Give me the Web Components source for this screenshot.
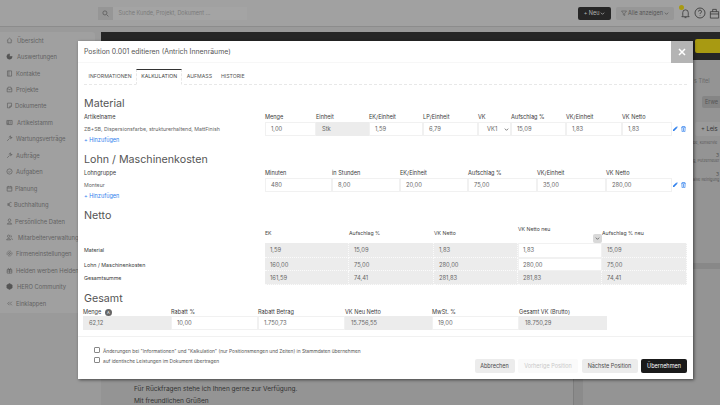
<!DOCTYPE html>
<html lang="de">
<head>
<meta charset="utf-8">
<title>Position editieren</title>
<style>
  html, body { margin: 0; padding: 0; width: 720px; height: 405px; overflow: hidden; background: #9a9a9a; font-family: Inter, "Liberation Sans", sans-serif; }
</style>
</head>
<body>
<app-shell>
  <edit-modal title-text="Position 0.001 editieren (Antrich Innenräume)">
    <calc-row slot="material" heading="Material" first-label="Artikelname" first-value="ZB+SB, Dispersionsfarbe, strukturerhaltend, MattFinish"
      cols="51 53 54 55 33 55 56 50"
      fields="Menge:1,00|Einheit:Stk:grey|EK/Einheit:1,59|LP/Einheit:6,79|VK:VK1:select|Aufschlag %:15,09|VK/Einheit:1,83|VK Netto:1,83"></calc-row>
    <calc-row slot="lohn" heading="Lohn / Maschinenkosten" first-label="Lohngruppe" first-value="Monteur"
      cols="67 68 68 69 69 66"
      fields="Minuten:480|in Stunden:8,00|EK/Einheit:20,00|Aufschlag %:75,00|VK/Einheit:35,00|VK Netto:280,00"></calc-row>
    <netto-table slot="netto"></netto-table>
    <gesamt-row slot="gesamt"></gesamt-row>
  </edit-modal>
</app-shell>

<script>
const ICONS = {
  home: '<path d="M1.500 6 6 2l4.500 4M3 5.500V10h6V5.500"/>',
  pie: '<path d="M6 1.500a4.500 4.500 0 1 0 4.500 4.500H6z" fill="currentColor"/>',
  book: '<path d="M2.500 1.500h7v9h-7zM5 1.500v9"/>',
  box: '<path d="M2 5l1.500-3h5L10 5v5H2zM2 5h2.500l1 1.500h1l1-1.500H10"/>',
  doc: '<path d="M2.500 2h7v5l-3 3h-4zM9.500 7h-3v3"/>',
  table: '<path d="M1.500 2.500h9v7h-9zM5 2.500v7M1.500 5h3.500M1.500 7.500h3.500M7 5h2M7 7h2"/>',
  tool: '<path d="M2 10l4-4M5.500 4.500a2.200 2.200 0 0 1 3-2.500L7 3.500 8.500 5 10 3.500a2.200 2.200 0 0 1-3 2.500"/>',
  check: '<circle cx="6" cy="6" r="4.500"/><path d="M4 6l1.500 1.500L8 4.800"/>',
  cal: '<path d="M2 3h8v7.500H2zM2 5.200h8M4 1.500V3M8 1.500V3"/>',
  euro: '<path d="M9.500 2.800a3.500 3.500 0 1 0 0 6.400M2 5h5M2 7h5"/>',
  user: '<circle cx="6" cy="3.800" r="2.200"/><path d="M2 10.500c.5-3 7.500-3 8 0z"/>',
  users: '<circle cx="4.500" cy="3.800" r="2"/><path d="M1 10c.4-3 6.600-3 7 0zM8 2.200a1.800 1.800 0 0 1 0 3.400M9.200 7c1 .4 1.600 1.500 1.800 3"/>',
  gear: '<circle cx="6" cy="6" r="1.600"/><circle cx="6" cy="6" r="4.200" stroke-dasharray="1.700 .8"/>',
  gift: '<path d="M2 4.500h8v6H2zM6 4.500v6M2 7h8M6 4.500C4 1 2.500 3 4 4.500M6 4.500C8 1 9.500 3 8 4.500"/>',
  hero: '<path d="M6 1l4.500 2.500v5L6 11 1.500 8.500v-5z" fill="currentColor"/>',
  back: '<path d="M6 3 3 6l3 3M10 3 7 6l3 3"/>'
};

function svgIcon(name, size) {
  return `<svg width="${size}" height="${size}" viewBox="0 0 12 12" fill="none" stroke="currentColor" stroke-width="1">${ICONS[name]}</svg>`;
}

const CHEVRON = '<svg width="5" height="5" viewBox="0 0 6 6" fill="none" stroke="currentColor" stroke-width=".900"><path d="M1 2l2 2 2-2"/></svg>';

class AppShell extends HTMLElement {
  constructor() {
    super();
    this.attachShadow({ mode: 'open' });
  }
  connectedCallback() {
    const items = [
      ['home', 'Übersicht', 17], ['pie', 'Auswertungen', 17], ['book', 'Kontakte', 16], ['box', 'Projekte', 16],
      ['doc', 'Dokumente', 15], ['table', 'Artikelstamm', 17], ['tool', 'Wartungsverträge', 16], ['tool', 'Aufträge', 16],
      ['check', 'Aufgaben', 16], ['cal', 'Planung', 15], ['euro', 'Buchhaltung', 14], ['user', 'Persönliche Daten', 15],
      ['users', 'Mitarbeiterverwaltung', 18], ['gear', 'Firmeneinstellungen', 16], ['gift', 'Helden werben Helden', 16],
      ['hero', 'HERO Community', 17], ['back', 'Einklappen', 16]
    ];
    const nav = items.map(([i, t, x]) => `<div class="item">${svgIcon(i, 7)}<span style="margin-left:${x - 13}px">${t}</span></div>`).join('');
    this.shadowRoot.innerHTML = `
    <style>
      :host { display: block; width: 720px; height: 405px; position: relative; overflow: hidden; color: #4c4c4c; font-size: 6.500px; }
      .top { height: 27px; background: #a1a1a1; border-bottom: 1px solid #8c8c8c; display: flex; align-items: center; padding: 0 0 0 98px; box-sizing: border-box; }
      .sicon { width: 16px; height: 13px; background: #969696; display: flex; align-items: center; justify-content: center; }
      .search { width: 133px; height: 13px; line-height: 13px; padding-left: 5px; color: #7b7b7b; font-size: 5.500px; background: #a4a4a4; white-space: nowrap; }
      .new { margin-left: 331px; width: 34px; height: 13px; background: #262626; color: #b5b5b5; border-radius: 2px; font-size: 5.500px; display: flex; align-items: center; justify-content: center; gap: 1px; }
      .all { margin-left: 5px; width: 60px; height: 13px; background: #979797; color: #555; border-radius: 2px; font-size: 5.500px; display: flex; align-items: center; justify-content: center; gap: 1px; }
      .ic { margin-left: 6px; display: flex; gap: 3px; align-items: center; color: #303030; position: relative; flex: none; }
      .dot { position: absolute; left: -1px; top: -2px; width: 5px; height: 5px; background: #a89a12; border-radius: 50%; }
      .main { display: flex; height: 378px; }
      .side { width: 95px; height: 281px; margin-top: 5px; background: #a0a0a0; border-radius: 0 3px 3px 0; box-sizing: border-box; flex: none; overflow: hidden; }
      .item { height: 16.450px; display: flex; align-items: center; padding-left: 6px; white-space: nowrap; color: #626262; font-size: 5.800px; }
      .item svg { color: #555; flex: none; }
      .content { margin: 5px 0 0 6px; flex: 1; display: flex; flex-direction: column; min-width: 0; }
      .banner { height: 28px; background: #262626; display: flex; justify-content: flex-end; align-items: flex-start; flex: none; padding-top: 7px; box-sizing: border-box; }
      .banner i { width: 25px; height: 14px; background: #a89a12; border-radius: 2px 0 0 2px; }
      .panel { flex: 1; background: #949494; display: flex; flex-direction: column; align-items: flex-end; position: relative; }
      .strip { position: absolute; left: 472px; top: 315px; width: 9px; height: 40px; background: #8b8b8b; border-left: 1px solid #7e7e7e; }
      .rside { width: 27px; padding-top: 17.500px; font-size: 5.500px; color: #555; white-space: nowrap; overflow: hidden; }
      .rside .t { line-height: 7px; height: 7px; padding-left: 1px; color: #6a6a6a; }
      .rside .b { background: #858585; height: 12px; line-height: 12px; padding-left: 3px; font-size: 5.500px; margin: 11.500px 0 0 9px; border-radius: 2px 0 0 2px; }
      .rside .c { background: #9a9a9a; height: 14px; line-height: 14px; padding-left: 6px; font-size: 5.800px; margin: 14px 0 0 2px; border-radius: 2px 0 0 2px; color: #333; }
      .rside .s { font-size: 3.800px; height: 6px; color: #5c5c5c; line-height: 6px; overflow: hidden; }
      .rside .first { margin-top: 4px; }
      .rside .n { font-size: 5px; line-height: 6px; text-align: right; padding: 6px 1px 0 0; }
      .rside .band { margin-top: 80px; height: 6px; background: #888; }
      .letter { position: absolute; left: 33px; top: 323px; font-size: 6.500px; color: #333; line-height: 12px; white-space: nowrap; }
    </style>
    <div class="top">
      <div class="sicon"><svg width="7" height="7" viewBox="0 0 12 12" fill="none" stroke="#5a5a5a" stroke-width="1.300"><circle cx="5" cy="5" r="3.500"/><path d="M8 8l3 3"/></svg></div>
      <div class="search">Suche Kunde, Projekt, Dokument ...</div>
      <div class="new">+ Neu ${CHEVRON}</div>
      <div class="all"><svg width="6" height="6" viewBox="0 0 6 6" fill="none" stroke="#555" stroke-width=".600"><path d="M.5 1h5L3.700 3.300V5.500L2.300 4.800V3.300z"/></svg> Alle anzeigen ${CHEVRON}</div>
      <div class="ic"><span class="dot"></span>
        <svg width="11" height="11" viewBox="0 0 12 12" fill="none" stroke="currentColor" stroke-width=".800"><path d="M3 8.500V5a3 3 0 0 1 6 0v3.500l1 1H2zM5 10.500h2"/></svg>
        <svg width="12" height="12" viewBox="0 0 12 12" fill="none" stroke="currentColor" stroke-width=".800"><circle cx="6" cy="6" r="5"/><path d="M4.500 4.500a1.500 1.500 0 1 1 2 1.500c-.4.200-.5.500-.5 1M6 8.500v.5"/></svg>
        <svg width="11" height="11" viewBox="0 0 12 12" fill="none" stroke="currentColor" stroke-width=".800"><path d="M1.500 4h9v7h-9zM1.500 6.500h9M4 4V1.500h4V4"/></svg>
      </div>
    </div>
    <div class="main">
      <div class="side">${nav}</div>
      <div class="content">
        <div class="banner"><i></i></div>
        <div class="panel">
          <div class="rside">
            <div class="t">s Titel</div>
            <div class="b">Erwe</div>
            <div class="c">+ Leis</div>
            <div class="s first">be, konservie</div>
            <div class="n">3</div>
            <div class="s">g, Putzerneuer</div>
            <div class="n" style="padding-top:7px">3</div>
            <div class="s">aive Reinigung</div>
            <div class="band"></div>
          </div>
          <div class="strip"></div>
          <div class="letter">Für Rückfragen stehe ich Ihnen gerne zur Verfügung.<br>Mit freundlichen Grüßen</div>
        </div>
      </div>
    </div>
    <slot></slot>`;
  }
}

class EditModal extends HTMLElement {
  constructor() {
    super();
    this.attachShadow({ mode: 'open' });
  }
  connectedCallback() {
    this.shadowRoot.innerHTML = `
    <style>
      :host { display: flex; flex-direction: column; position: absolute; left: 78px; top: 41px; width: 615px; height: 338px; background: #fff; color: #3c3c3c; box-shadow: 1px 1px 3px rgba(0,0,0,.55); box-sizing: border-box; }
      .close { position: absolute; right: 0; top: 0; width: 22px; height: 22px; background: #b4b4b4; display: flex; align-items: center; justify-content: center; }
      header { height: 22px; flex: none; padding: 0 6px; display: flex; align-items: center; font-size: 6.900px; color: #555; border-bottom: 1px solid #f7f7f7; box-sizing: border-box; }
      nav { display: flex; flex: none; margin: 6px 6px 0; height: 15px; border-bottom: 1px dashed #e8e8e8; font-size: 5.200px; color: #555; }
      nav span { padding: 0 4.500px; line-height: 15px; }
      nav .on { border: 1px dashed #e8e8e8; border-top: 1px solid #333; border-bottom: 1px solid #fff; padding: 0 4px; height: 14px; line-height: 13px; color: #444; }
      .body { flex: 1; padding: 2.500px 6px 0; display: flex; flex-direction: column; }
      footer { border-top: 1px solid #f1f1f1; flex: none; height: 43px; padding: 0 6px 6px 16px; box-sizing: border-box; display: flex; justify-content: space-between; align-items: flex-end; }
      .checks { align-self: flex-start; padding-top: 10.500px; display: flex; flex-direction: column; gap: 4px; font-size: 4.800px; color: #555; }
      .checks label { display: flex; align-items: center; gap: 3px; height: 6px; white-space: nowrap; }
      .checks i { width: 4px; height: 4px; border: .600px solid #888; border-radius: 1px; flex: none; margin-top: -2px; }
      .btns { display: flex; gap: 3.500px; }
      .btns span { height: 14px; line-height: 14px; text-align: center; border-radius: 2px; font-size: 5.500px; background: #ececec; color: #4a4a4a; white-space: nowrap; }
      .btns .off { background: #fafafa; color: #c9c9c9; }
      .btns .go { background: #1a1a1a; color: #fff; }
    </style>
    <div class="close"><svg width="8" height="8" viewBox="0 0 8 8" stroke="#fff" stroke-width="1.500" fill="none"><path d="M1 1l6 6M7 1 1 7"/></svg></div>
    <header>${this.getAttribute('title-text')}</header>
    <nav><span>INFORMATIONEN</span><span class="on">KALKULATION</span><span>AUFMASS</span><span>HISTORIE</span></nav>
    <div class="body">
      <slot name="material"></slot>
      <slot name="lohn"></slot>
      <slot name="netto"></slot>
      <slot name="gesamt"></slot>
    </div>
    <footer>
      <div class="checks">
        <label><i></i>Änderungen bei "Informationen" und "Kalkulation" (nur Positionsmengen und Zeiten) in Stammdaten übernehmen</label>
        <label><i></i>auf identische Leistungen im Dokument übertragen</label>
      </div>
      <div class="btns">
        <span style="width:40px">Abbrechen</span>
        <span class="off" style="width:60px">Vorherige Position</span>
        <span style="width:56px">Nächste Position</span>
        <span class="go" style="width:46px">Übernehmen</span>
      </div>
    </footer>`;
  }
}

const CELL_CSS = `
  .h { font-size: 10.700px; line-height: 13px; color: #555; font-weight: 400; margin: 0; }
  .lab { font-size: 5.600px; color: #3a3a3a; line-height: 7px; white-space: nowrap; }
  .cell { height: 14px; line-height: 12px; font-size: 5.800px; color: #666; padding-left: 5px; box-sizing: border-box; border: 1px solid #f1f1f1; border-left-width: .500px; border-right-width: .500px; white-space: nowrap; }
  .grey { background: #ececec; border-color: #ececec; }
`;

class CalcRow extends HTMLElement {
  constructor() {
    super();
    this.attachShadow({ mode: 'open' });
  }
  connectedCallback() {
    const cols = this.getAttribute('cols').split(' ').map(c => c + 'px').join(' ');
    const fields = this.getAttribute('fields').split('|').map(f => f.split(':'));
    const labels = fields.map(f => `<div class="lab">${f[0]}</div>`).join('');
    const cells = fields.map(f => {
      if (f[2] === 'select') return `<div class="cell sel"><span>${f[1]}</span>${CHEVRON}</div>`;
      return `<div class="cell ${f[2] || ''}">${f[1]}</div>`;
    }).join('');
    this.shadowRoot.innerHTML = `
    <style>
      :host { display: block; }
      ${CELL_CSS}
      .h { padding-top: 9px; }
      .grid { display: grid; grid-template-columns: 181px ${cols} 15px; align-items: center; margin-top: 4px; }
      .first { font-size: 5.230px; color: #666; white-space: nowrap; }
      .lab { padding-bottom: 1.500px; }
      .sel { display: flex; justify-content: space-between; align-items: center; padding: 0 1px 0 8px; }
      .sel svg { color: #555; }
      .acts { display: flex; gap: 3px; justify-content: flex-end; padding-right: 1px; }
      .add { color: #2f80ed; font-size: 5.500px; line-height: 7px; margin-top: .500px; }
    </style>
    <h2 class="h">${this.getAttribute('heading')}</h2>
    <div class="grid">
      <div class="lab">${this.getAttribute('first-label')}</div>${labels}<div></div>
      <div class="first">${this.getAttribute('first-value')}</div>${cells}
      <div class="acts">
        <svg width="5" height="5" viewBox="0 0 6 6" fill="#2f80ed"><path d="M0 6V4.600L3.800.8l1.400 1.400L1.400 6zM4.200.4l.4-.4L6 1.400l-.4.400z"/></svg>
        <svg width="5" height="6" viewBox="0 0 5 6" fill="none" stroke="#2f80ed" stroke-width=".700"><path d="M.3 1.200h4.400M1.500 1.200V.4h2v.8M.8 1.200l.3 4.500h2.800l.3-4.500M2.500 2v3"/></svg>
      </div>
    </div>
    <div class="add">+ Hinzufügen</div>`;
  }
}

class NettoTable extends HTMLElement {
  constructor() {
    super();
    this.attachShadow({ mode: 'open' });
  }
  connectedCallback() {
    const rows = [
      ['Material', '1,59', '15,09', '1,83', '1,83', '15,09', true],
      ['Lohn / Maschinenkosten', '160,00', '75,00', '280,00', '280,00', '75,00', true],
      ['Gesamtsumme', '161,59', '74,41', '281,83', '281,83', '74,41', false]
    ];
    const body = rows.map(r => `
      <div class="name">${r[0]}</div>
      <div class="v">${r[1]}</div><div class="v">${r[2]}</div><div class="v">${r[3]}</div>
      <div class="v ${r[6] ? 'edit' : ''}">${r[4]}</div><div class="v">${r[5]}</div>`).join('');
    this.shadowRoot.innerHTML = `
    <style>
      :host { display: block; }
      ${CELL_CSS}
      .h { padding-top: 9px; }
      .grid { display: grid; grid-template-columns: 181px 84px 85px 84px 84px 85px; grid-template-rows: 21.500px 15px 13px 14px; }
      .lab { align-self: center; font-size: 5.200px; color: #444; margin-top: 3px; }
      .neu { position: relative; padding-top: 4px; font-size: 5.200px; color: #444; line-height: 7px; white-space: nowrap; }
      .name { font-size: 5.300px; color: #3a3a3a; line-height: 14px; white-space: nowrap; }
      .v { background: #ececec; font-size: 5.800px; color: #666; line-height: 13px; padding-left: 5px; border-bottom: 1px dotted #fbfbfb; border-right: 1px dotted #fbfbfb; box-sizing: border-box; }
      .edit { background: #fff; border: 1px solid #f1f1f1; line-height: 12px; padding-left: 4px; }
      .drop { position: absolute; right: 0; bottom: 0; width: 9px; height: 9px; background: #d9d9d9; border-radius: 2px; display: flex; align-items: center; justify-content: center; color: #555; }
    </style>
    <h2 class="h">Netto</h2>
    <div class="grid">
      <div></div>
      <div class="lab">EK</div><div class="lab">Aufschlag %</div><div class="lab">VK Netto</div>
      <div class="neu">VK Netto neu<span class="drop">${CHEVRON}</span></div>
      <div class="lab">Aufschlag % neu</div>
      ${body}
    </div>`;
  }
}

class GesamtRow extends HTMLElement {
  constructor() {
    super();
    this.attachShadow({ mode: 'open' });
  }
  connectedCallback() {
    const f = [
      ['Menge <b>A</b>', '62,12', 'grey'], ['Rabatt %', '10,00', ''], ['Rabatt Betrag', '1.750,73', ''],
      ['VK Neu Netto', '15.756,55', 'grey'], ['MwSt. %', '19,00', ''], ['Gesamt VK (Brutto)', '18.750,29', 'grey']
    ];
    this.shadowRoot.innerHTML = `
    <style>
      :host { display: block; }
      ${CELL_CSS}
      .h { padding-top: 6.500px; }
      .grid { display: grid; grid-template-columns: 88px 87px 87px 87px 87px 88px; grid-auto-flow: column; grid-template-rows: 7.500px 14px; margin: 4px 0 0 -1px; padding-bottom: 6px; }
      b { display: inline-block; width: 7px; height: 7px; line-height: 7px; border-radius: 50%; background: #666; color: #fff; font-size: 4px; text-align: center; font-weight: 400; vertical-align: top; margin-left: 2px; }
    </style>
    <h2 class="h">Gesamt</h2>
    <div class="grid">
      ${f.map(x => `<div class="lab">${x[0]}</div><div class="cell ${x[2]}">${x[1]}</div>`).join('')}
    </div>`;
  }
}

customElements.define('app-shell', AppShell);
customElements.define('edit-modal', EditModal);
customElements.define('calc-row', CalcRow);
customElements.define('netto-table', NettoTable);
customElements.define('gesamt-row', GesamtRow);
</script>
</body>
</html>
